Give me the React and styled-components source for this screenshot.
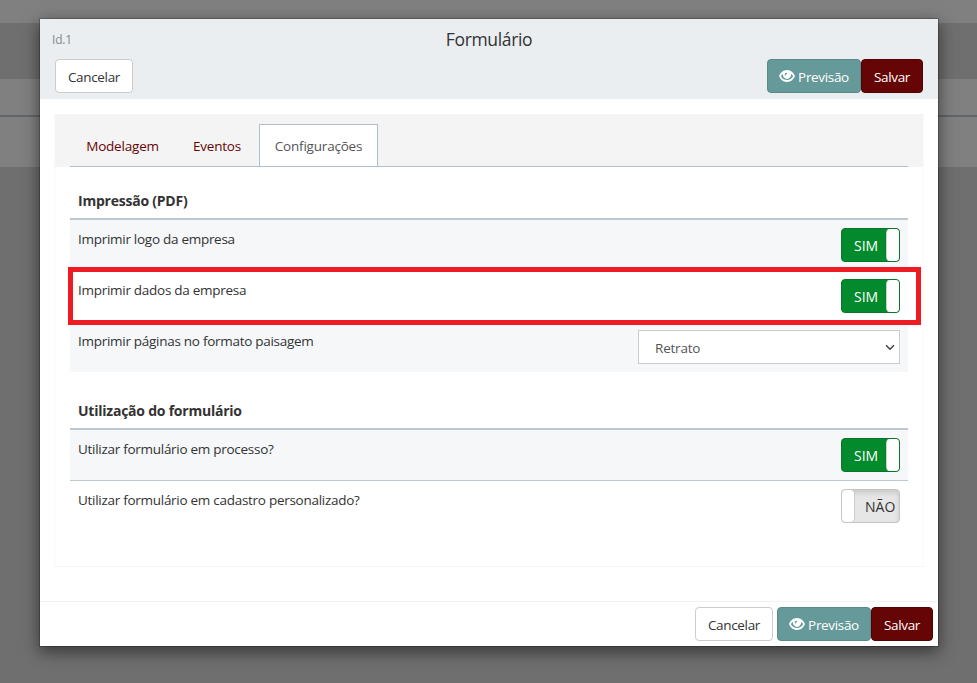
import React from "react";
import styled, { createGlobalStyle, css } from "styled-components";

const Global = createGlobalStyle`
  * { box-sizing: border-box; }
  html, body { margin: 0; height: 100%; overflow: hidden; }
  body {
    font-family: "Open Sans", "Noto Sans", sans-serif;
    font-size: 14px;
    line-height: 20px;
    color: #333;
    background: #6f6f6f;
  }
`;

const Backdrop = styled.div`
  height: 683px;
  width: 977px;
  padding: 19px 39px 0 40px;
  background: linear-gradient(
    #808080 0 23px, #6f6f6f 23px 79px, #808080 79px 115px,
    #60666a 115px 117px, #808080 117px 167px, #6f6f6f 167px
  );
`;

const Modal = styled.div`
  position: relative;
  display: flex;
  flex-direction: column;
  height: 627px;
  background: #fff;
  box-shadow: 0 0 0 1px rgba(0, 0, 0, 0.2), 0 5px 15px 1px rgba(0, 0, 0, 0.5);
`;

const Header = styled.header`
  height: 80px;
  padding: 10px 15px 0;
  background: #eaeef1;
`;

const HeaderTop = styled.div`
  display: grid;
  grid-template-columns: 1fr auto 1fr;
  height: 30px;
  margin-left: -3px;
  margin-right: -3px;
`;

const RecordId = styled.span`
  font-size: 12px;
  line-height: 21px;
  letter-spacing: -0.2px;
  color: #888;
`;

const Title = styled.h4`
  margin: 0;
  font-size: 17.5px;
  font-weight: 400;
  line-height: 21px;
  letter-spacing: -0.35px;
`;

const HeaderActions = styled.div`
  display: flex;
  justify-content: space-between;
`;

const Group = styled.div`
  display: flex;
`;

const tones = {
  plain: css`background: #fff; border-color: #ccc; color: #333;`,
  teal: css`background: #669999; border-color: #5c8a8a; color: #fff;`,
  wine: css`background: #660505; border-color: #4d0404; color: #fff;`,
};

const Button = styled.button`
  display: flex;
  align-items: center;
  justify-content: center;
  gap: 3px;
  width: ${(p) => p.$w}px;
  height: 34px;
  padding: 2px 0 0;
  border: 1px solid;
  border-radius: 4px;
  font: inherit;
  font-size: 13.5px;
  letter-spacing: -0.33px;
  white-space: nowrap;
  ${(p) => tones[p.$tone]}
`;

const EyeSvg = styled.svg`
  width: 16px;
  height: 14px;
  margin-top: -3px;
`;

const Panel = styled.section`
  height: 453px;
  margin: 15px 14px 0;
  border: 1px solid #fafafa;
  border-top: 0;
  border-bottom-color: #f4f4f4;
`;

const TabBar = styled.div`
  height: 53px;
  padding: 10px 15px 0;
  background: #f4f4f4;
`;

const Tabs = styled.nav`
  display: flex;
  height: 43px;
  border-bottom: 1px solid #afc0cd;
`;

const Tab = styled.a`
  width: ${(p) => p.$w}px;
  height: 42px;
  margin-right: 2px;
  padding-top: 11px;
  border: 1px solid transparent;
  border-bottom: 0;
  font-size: 13.5px;
  letter-spacing: -0.2px;
  text-align: center;
  color: #660505;
  ${(p) => p.$active && css`background: #fff; border-color: #afc0cd; color: #555;`}
`;

const Content = styled.div`
  padding: 0 15px;
`;

const SectionTitle = styled.h5`
  height: ${(p) => p.$h}px;
  margin: 0;
  padding: 0 8px 7px;
  display: flex;
  align-items: flex-end;
  border-bottom: 2px solid #bcc7ce;
  font-size: 14px;
  font-weight: 700;
  letter-spacing: -0.23px;
`;

const Row = styled.div`
  display: flex;
  justify-content: space-between;
  height: ${(p) => (p.$first ? 50 : 51)}px;
  padding: 8px 8px 0;
  border-top: ${(p) => (p.$first ? 0 : 1)}px solid #bcc7ce;
  background: ${(p) => (p.$shade ? "#f5f7f9" : "#fff")};
`;

const Label = styled.span`
  font-size: 13.5px;
  line-height: 23px;
  letter-spacing: -0.28px;
`;

const Toggle = styled.div`
  display: flex;
  flex-direction: ${(p) => (p.$on ? "row" : "row-reverse")};
  width: 59px;
  height: 34px;
  border: 1px solid ${(p) => (p.$on ? "#087528" : "#c5c5c5")};
  border-radius: 4px;
  overflow: hidden;
  background: ${(p) => (p.$on ? "#028a2c" : "#e6e6e6")};
  color: ${(p) => (p.$on ? "#fff" : "#333")};
  box-shadow: ${(p) => (p.$on ? "none" : "inset 0 3px 5px rgba(0,0,0,.125)")};
`;

const ToggleText = styled.span`
  flex: 1;
  padding: ${(p) => (p.$on ? "7px 0 0 12px" : "7px 0 0 11px")};
  white-space: nowrap;
`;

const Handle = styled.span`
  width: 12px;
  background: #fff;
  border-radius: 4px;
  box-shadow: 0 0 0 1px #ccc;
`;

const Select = styled.div`
  display: flex;
  align-items: center;
  justify-content: space-between;
  width: 262px;
  height: 34px;
  padding: 2px 4px 0 16px;
  border: 1px solid #ccc;
  background: #fff;
  font-size: 13.5px;
  letter-spacing: -0.2px;
  color: #555;
`;

const Chevron = styled.svg`
  width: 10px;
  height: 7px;
  margin-top: -2px;
`;

const Footer = styled.footer`
  display: flex;
  justify-content: flex-end;
  gap: 4px;
  height: 45px;
  margin-top: auto;
  padding: 5px 5px 0;
  border-top: 1px solid #f2f2f2;
`;

const Highlight = styled.div`
  position: absolute;
  left: 28px;
  top: 248px;
  width: 853px;
  height: 58px;
  border: 5px solid #ed1c24;
  pointer-events: none;
`;

function Eye() {
  return (
    <EyeSvg viewBox="0 0 16 14">
      <path
        fillRule="evenodd"
        fill="#fff"
        d="M8 1C12 1 14.8 4 16 7C14.8 10 12 13 8 13S1.200 10 0 7C1.200 4 4 1 8 1ZM4 4.900C3 5.500 2.300 6.200 1.800 7C3.200 9.400 5.300 11 8 11S12.800 9.400 14.200 7C13.700 6.200 13 5.500 12 4.900A4.100 4.100 0 1 1 4 4.900ZM7.800 3.800C6.300 3.900 5.600 5 5.700 6.300L6.600 6.600C6.800 5.600 7.300 5 8.100 4.700Z"
      />
    </EyeSvg>
  );
}

function SaveGroup() {
  return (
    <Group>
      <Button $tone="teal" $w={94}><Eye />Previsão</Button>
      <Button $tone="wine" $w={62}>Salvar</Button>
    </Group>
  );
}

function Switch({ on }) {
  return (
    <Toggle $on={on}>
      <ToggleText $on={on}>{on ? "SIM" : "NÃO"}</ToggleText>
      <Handle />
    </Toggle>
  );
}

export default function App() {
  return (
    <>
      <Global />
      <Backdrop>
        <Modal>
          <Header>
            <HeaderTop>
              <RecordId>Id.1</RecordId>
              <Title>Formulário</Title>
            </HeaderTop>
            <HeaderActions>
              <Button $tone="plain" $w={78}>Cancelar</Button>
              <SaveGroup />
            </HeaderActions>
          </Header>
          <Panel>
            <TabBar>
              <Tabs>
                <Tab $w={105}>Modelagem</Tab>
                <Tab $w={80}>Eventos</Tab>
                <Tab $w={119} $active>Configurações</Tab>
              </Tabs>
            </TabBar>
            <Content>
              <SectionTitle $h={53}>Impressão (PDF)</SectionTitle>
              <Row $first $shade><Label>Imprimir logo da empresa</Label><Switch on /></Row>
              <Row><Label>Imprimir dados da empresa</Label><Switch on /></Row>
              <Row $shade>
                <Label>Imprimir páginas no formato paisagem</Label>
                <Select>
                  Retrato
                  <Chevron viewBox="0 0 10 7"><path d="M1 1.200l4 4 4-4" fill="none" stroke="#444" strokeWidth="1.500" /></Chevron>
                </Select>
              </Row>
              <SectionTitle $h={58}>Utilização do formulário</SectionTitle>
              <Row $first $shade><Label>Utilizar formulário em processo?</Label><Switch on /></Row>
              <Row><Label>Utilizar formulário em cadastro personalizado?</Label><Switch /></Row>
            </Content>
          </Panel>
          <Footer>
            <Button $tone="plain" $w={78}>Cancelar</Button>
            <SaveGroup />
          </Footer>
          <Highlight />
        </Modal>
      </Backdrop>
    </>
  );
}
